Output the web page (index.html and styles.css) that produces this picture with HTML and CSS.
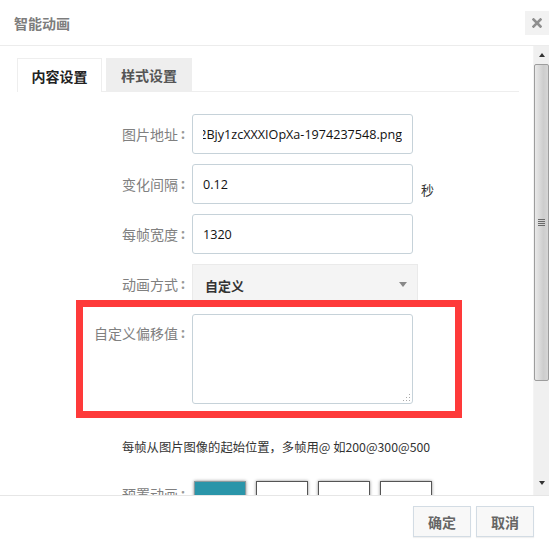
FILE: index.html
```html
<!DOCTYPE html>
<html>
<head>
<meta charset="utf-8">
<link rel="stylesheet" href="styles.css">
</head>
<body>
<div class="dialog">
  <div class="header">
    <div class="title">智能动画</div>
    <div class="close">
      <svg width="10" height="10" viewBox="0 0 10 10"><path d="M1.5 1.5 L8.5 8.5 M8.5 1.5 L1.5 8.5" stroke="#8f8f8f" stroke-width="2.6" stroke-linecap="square"/></svg>
    </div>
  </div>
  <div class="main">
    <div class="content">
      <div class="tabs">
        <div class="tab active">内容设置</div>
        <div class="tab">样式设置</div>
      </div>
      <div class="form">
        <div class="label"><span>图片地址</span><span class="colon">:</span></div>
        <div class="input"><div class="clip end"><span>//img.alicdn.com/imgextra/i4/TB2Bjy1zcXXXIOpXa-1974237548.png</span></div></div>
        <div class="unit"></div>

        <div class="label"><span>变化间隔</span><span class="colon">:</span></div>
        <div class="input"><div class="clip"><span>0.12</span></div></div>
        <div class="unit">秒</div>

        <div class="label"><span>每帧宽度</span><span class="colon">:</span></div>
        <div class="input"><div class="clip"><span>1320</span></div></div>
        <div class="unit"></div>

        <div class="label"><span>动画方式</span><span class="colon">:</span></div>
        <div class="select"><span>自定义</span><i class="caret"></i></div>
        <div class="unit"></div>

        <div class="label top"><span>自定义偏移值</span><span class="colon">:</span></div>
        <div class="textarea"><i class="grip"></i></div>
        <div class="unit"></div>
      </div>
      <div class="help">每帧从图片图像的起始位置，多帧用@ 如200@300@500</div>
      <div class="preset">
        <div class="label"><span>预置动画</span><span class="colon">:</span></div>
        <div class="boxes">
          <div class="box on"></div>
          <div class="box"></div>
          <div class="box"></div>
          <div class="box"></div>
        </div>
      </div>
    </div>
    <div class="scrollbar">
      <div class="sb-btn up"><i></i></div>
      <div class="sb-thumb"><span class="lines"><b></b><b></b><b></b><b></b></span></div>
      <div class="sb-track"></div>
      <div class="sb-btn down"><i></i></div>
    </div>
  </div>
  <div class="footer">
    <div class="btn">确定</div>
    <div class="btn">取消</div>
  </div>
  <div class="highlight"></div>
</div>
</body>
</html>
```
FILE: styles.css
```css
* { box-sizing: border-box; }
html, body { margin: 0; padding: 0; background: #fff; }
body { font-family: "Noto Sans CJK SC", "Noto Sans", sans-serif; color: #333; }

.dialog { position: relative; width: 549px; height: 552px; overflow: hidden; background: #fff; }

.header { height: 46px; border-bottom: 1px solid #ececec; display: flex; align-items: flex-start; justify-content: space-between; }
.title { padding: 13px 0 0 14px; font-size: 14px; font-weight: bold; color: #7d7d7d; line-height: 20px; }
.close { width: 24px; height: 24px; margin-top: 11px; background: #f2f2f2; display: flex; align-items: center; justify-content: center; }

.main { display: flex; height: 449px; }
.content { flex: 1; overflow: hidden; padding: 12px 14px 0 17px; }

.tabs { display: flex; gap: 4px; height: 34px; border-bottom: 1px solid #eeeeee; }
.tab { width: 86px; height: 34px; display: flex; align-items: center; justify-content: center; font-size: 14px; font-weight: bold; color: #555; background: #eeeeee; }
.tab.active { background: #fff; color: #222; border: 1px solid #eeeeee; border-bottom: none; width: 85px; }

.form { display: grid; grid-template-columns: 175px 226px auto; grid-template-rows: 40px 40px 40px 40px 90px; row-gap: 10px; padding-top: 22px; }
.label { display: flex; justify-content: flex-end; align-items: center; font-size: 14px; color: #808080; line-height: 20px; white-space: nowrap; height: 40px; }
.label.top { align-items: flex-start; padding-top: 9px; }
.colon { display: block; width: 14px; padding-left: 3px; text-align: left; font-family: "Noto Sans", sans-serif; font-weight: bold; color: #999; }
.input { width: 221px; height: 40px; border: 1px solid #c6d2d9; border-radius: 3px; display: flex; align-items: center; padding: 0 10px; font-family: "Open Sans", "Noto Sans", sans-serif; font-size: 12.6px; color: #111; white-space: nowrap; }
.clip { flex: 1; min-width: 0; overflow: hidden; display: flex; }
.clip.end { justify-content: flex-end; }
.clip span { flex-shrink: 0; }
.unit { font-size: 13px; color: #333; padding: 17px 0 0 3px; line-height: 18px; }

.select { width: 226px; height: 40px; background: #f4f4f4; border: 1px solid #eaeaea; border-bottom: none; display: flex; align-items: center; justify-content: space-between; padding: 2px 10px 0 12px; font-size: 13px; font-weight: bold; color: #333; }
.caret { width: 0; height: 0; border-left: 4px solid transparent; border-right: 4px solid transparent; border-top: 5px solid #888; margin-top: -3px; }

.textarea { position: relative; width: 221px; height: 90px; border: 1px solid #c6d2d9; border-radius: 3px; }
.grip { position: absolute; right: 2px; bottom: 2px; width: 8px; height: 8px;
  background:
    radial-gradient(circle, #aaa 0.8px, transparent 1px) 0 0 / 3px 3px;
  clip-path: polygon(100% 0, 100% 100%, 0 100%); }

.help { margin: 33px 0 0 105px; font-size: 12.3px; line-height: 20px; color: #333; white-space: nowrap; }

.preset { display: flex; margin-top: 24px; }
.preset .label { width: 175px; height: 20px; margin-top: 3px; }
.boxes { display: flex; gap: 10px; margin-left: 2px; }
.box { width: 52px; height: 40px; border: 1px solid #555; box-shadow: 0 0 3px rgba(0,0,0,0.45); background: #fff; }
.box.on { background: #2a95a9; border-color: #8a9a9e; }

.scrollbar { width: 16px; display: flex; flex-direction: column; background: #f0f0f0; border-left: 1px solid #f4f4f4; }
.sb-btn { height: 18px; display: flex; align-items: center; justify-content: center; }
.sb-btn i { width: 0; height: 0; border-left: 3.5px solid transparent; border-right: 3.5px solid transparent; }
.sb-btn.up i { border-bottom: 4px solid #333; }
.sb-btn.down { height: 20px; align-items: flex-start; padding-top: 6px; }
.sb-btn.down i { border-top: 4px solid #333; }
.sb-thumb { height: 317px; border: 1px solid #9d9d9d; border-radius: 2px; background: linear-gradient(to right, #e9e9e9 0%, #dadada 35%, #cdcdcd 65%, #d6d6d6 100%); display: flex; align-items: center; justify-content: center; }
.lines { display: flex; flex-direction: column; gap: 1px; }
.lines b { display: block; width: 7px; height: 1px; background: #6a6a6a; }
.sb-track { flex: 1; }

.footer { height: 57px; border-top: 1px solid #e6e6e6; display: flex; justify-content: flex-end; gap: 5px; padding: 10px 15px 0 0; }
.btn { width: 58px; height: 31px; border: 1px solid #d3dce4; background: #f8f8f8; box-shadow: 0 1px 1px rgba(0,0,0,0.06); display: flex; align-items: center; justify-content: center; font-size: 14px; font-weight: bold; color: #666; }

.highlight { position: absolute; left: 76px; top: 300px; width: 386px; height: 118px; border: 7px solid #fe3a3a; pointer-events: none; }
```
